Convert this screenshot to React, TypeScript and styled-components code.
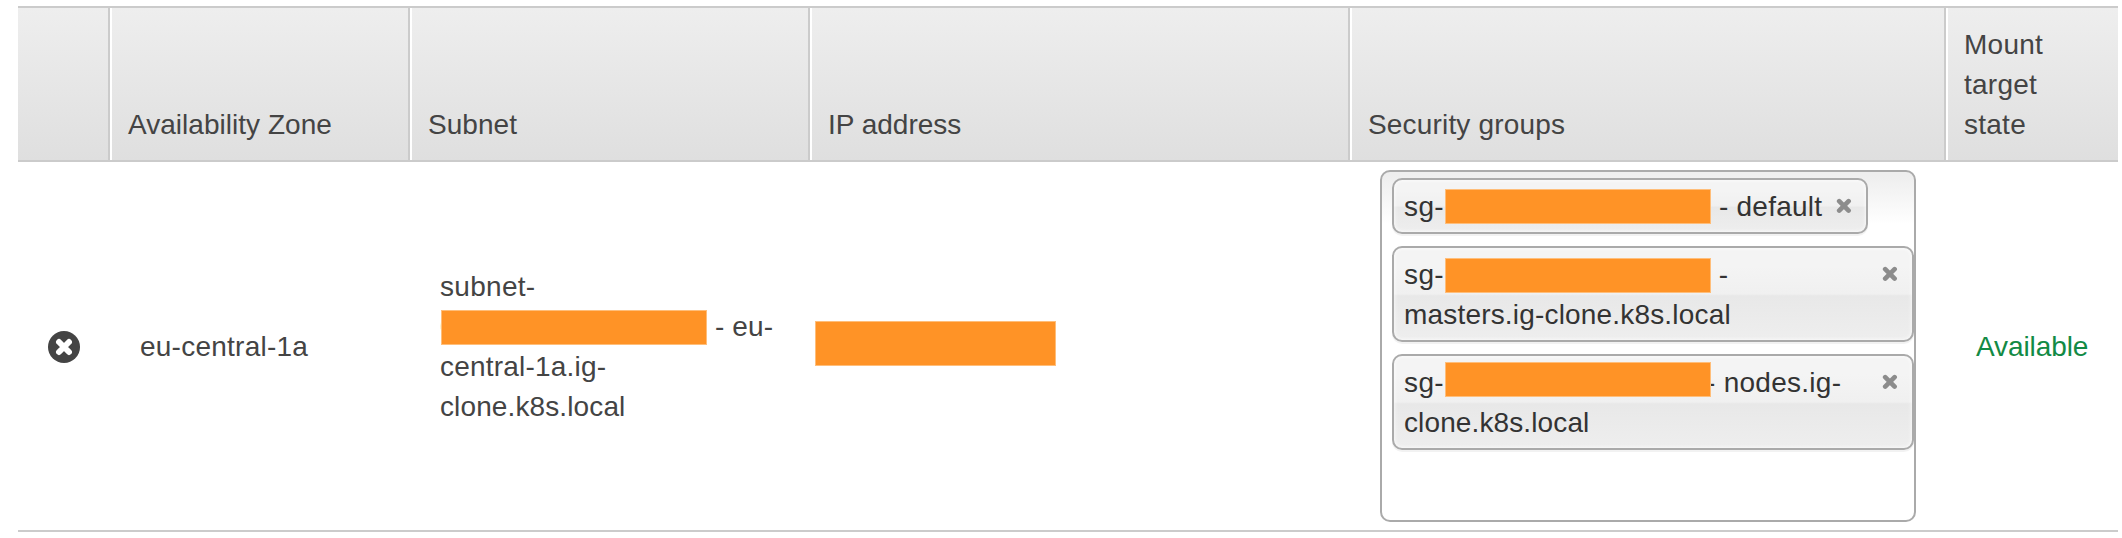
import React from "react";
import styled, { createGlobalStyle } from "styled-components";

const GlobalStyle = createGlobalStyle`
  * { box-sizing: border-box; }
  body {
    margin: 0;
    background: #fff;
    color: #444;
    font: 28px/40px "Liberation Sans", Arial, sans-serif;
  }
`;

const Page = styled.main`
  width: 2122px;
  height: 538px;
  padding: 6px 4px 0 18px;
  overflow: hidden;
`;

const Table = styled.div`
  display: grid;
  grid-template-columns: 92px 300px 400px 540px 596px 172px;
  grid-template-rows: 156px 370px;
`;

const HeaderRow = styled.div`
  display: grid;
  grid-column: 1 / -1;
  grid-template-columns: subgrid;
  border-top: 2px solid #cbcbcb;
  border-bottom: 2px solid #cbcbcb;
  background: linear-gradient(#eeeeee, #dfdfdf);
`;

const HeaderCell = styled.div<{ $track: number }>`
  display: flex;
  align-items: flex-end;
  padding: 17px 14px 15px 16px;
  border-right: 2px solid #cbcbcb;
  border-left: 2px solid #fff;
  letter-spacing: ${(p) => p.$track}px;

  &:first-child { border-left: 0; }
  &:last-child { border-right: 0; padding-right: 60px; }
`;

const Row = styled.div`
  display: grid;
  grid-column: 1 / -1;
  grid-template-columns: subgrid;
  border-bottom: 2px solid #cbcbcb;
`;

const Cell = styled.div<{ $indent?: number }>`
  display: flex;
  flex-direction: column;
  align-items: flex-start;
  justify-content: center;
  padding-left: ${(p) => p.$indent ?? 30}px;
`;

const Line = styled.div<{ $track?: number }>`
  display: flex;
  height: 40px;
  line-height: 42px;
  letter-spacing: ${(p) => p.$track ?? 0}px;
  white-space: pre;
`;

const Prefix = styled.span`
  width: 41px;
  letter-spacing: 0.4px;
`;

const Redaction = styled.span<{ $w?: number; $h?: number; $top?: number; $gap?: number }>`
  flex: none;
  width: ${(p) => p.$w ?? 266}px;
  height: ${(p) => p.$h ?? 35}px;
  margin-top: ${(p) => p.$top ?? 0}px;
  margin-right: ${(p) => p.$gap ?? 0}px;
  border: 1px solid #ffbe7a;
  background: #ff9326;
  z-index: 1;
`;

const Peek = styled.span`
  width: 1px;
`;

const Status = styled(Line)`
  color: #128a45;
`;

const RemoveButton = styled.button`
  display: flex;
  width: 32px;
  height: 32px;
  margin-top: 1px;
  padding: 0;
  border: 0;
  background: none;
`;

const GroupPicker = styled.div`
  display: flex;
  flex-direction: column;
  align-items: flex-start;
  gap: 12px;
  width: 536px;
  height: 352px;
  padding: 6px 0 0 10px;
  border: 2px solid #aaa;
  border-radius: 10px;
  background: linear-gradient(#eee 1%, #fff 15%);
`;

const Chip = styled.div<{ $w: number }>`
  display: flex;
  justify-content: space-between;
  width: ${(p) => p.$w}px;
  padding: 6px 14px 6px 10px;
  border: 2px solid #aaa;
  border-radius: 10px;
  color: #333;
  background: linear-gradient(#f4f4f4 20%, #f0f0f0 50%, #e8e8e8 52%, #eee 100%);
  box-shadow: 0 0 4px #fff inset, 0 2px 0 rgba(0, 0, 0, 0.05);
`;

const ChipClose = styled.svg`
  flex: none;
  width: 16px;
  height: 16px;
  margin-top: 12px;
`;

const CloseMark = () => (
  <ChipClose viewBox="0 0 16 16">
    <path d="M3.2 3.2L12.6 12.6M12.6 3.2L3.2 12.6" stroke="#8c8c8c" strokeWidth="4.7" strokeLinecap="round" />
  </ChipClose>
);

type Group = {
  width: number;
  top: number;
  gap: number;
  tail: string;
  track: number;
  rest?: string;
  restTrack?: number;
};

const groups: Group[] = [
  { width: 476, top: 3, gap: 0, tail: " - default", track: 0.22 },
  { width: 522, top: 4, gap: 0, tail: " -", track: 0, rest: "masters.ig-clone.k8s.local", restTrack: 0.18 },
  { width: 522, top: 0, gap: -5, tail: "- nodes.ig-", track: 0.27, rest: "clone.k8s.local", restTrack: 0.12 },
];

const headers = [
  { text: "", track: 0 },
  { text: "Availability Zone", track: 0.03 },
  { text: "Subnet", track: 0.05 },
  { text: "IP address", track: 0 },
  { text: "Security groups", track: 0.17 },
  { text: "Mount target state", track: 0.25 },
];

export default function App() {
  return (
    <Page>
      <GlobalStyle />
      <Table>
        <HeaderRow>
          {headers.map((h) => (
            <HeaderCell key={h.text} $track={h.track}>
              {h.text}
            </HeaderCell>
          ))}
        </HeaderRow>
        <Row>
          <Cell>
            <RemoveButton aria-label="Remove">
              <svg width="32" height="32" viewBox="0 0 32 32">
                <circle cx="16" cy="16" r="16" fill="#444" />
                <path d="M11 11L21 21M21 11L11 21" stroke="#fff" strokeWidth="5.9" strokeLinecap="round" />
              </svg>
            </RemoveButton>
          </Cell>
          <Cell>
            <Line $track={0.24}>eu-central-1a</Line>
          </Cell>
          <Cell>
            <Line $track={0.3}>subnet-</Line>
            <Line $track={0.15}>
              <Peek>0</Peek>
              <Redaction $top={4} />
              <span> - eu-</span>
            </Line>
            <Line $track={0.2}>central-1a.ig-</Line>
            <Line $track={0.12}>clone.k8s.local</Line>
          </Cell>
          <Cell $indent={5}>
            <Redaction $w={241} $h={45} $top={-5} />
          </Cell>
          <Cell>
            <GroupPicker>
              {groups.map((g) => (
                <Chip key={g.tail} $w={g.width}>
                  <div>
                    <Line $track={g.track}>
                      <Prefix>sg-</Prefix>
                      <Redaction $top={g.top} $gap={g.gap} />
                      <span>{g.tail}</span>
                    </Line>
                    {g.rest && <Line $track={g.restTrack}>{g.rest}</Line>}
                  </div>
                  <CloseMark />
                </Chip>
              ))}
            </GroupPicker>
          </Cell>
          <Cell>
            <Status $track={-0.1}>Available</Status>
          </Cell>
        </Row>
      </Table>
    </Page>
  );
}
